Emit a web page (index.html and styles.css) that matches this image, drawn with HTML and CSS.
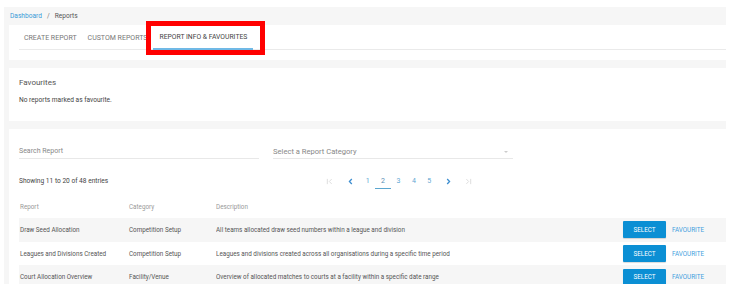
FILE: index.html
```html
<!DOCTYPE html>
<html>
<head>
<meta charset="utf-8">
<link rel="stylesheet" href="styles.css">
</head>
<body>
<div class="page">
  <div class="crumbs"><a class="crumb-link">Dashboard</a><span class="sep">/</span><span>Reports</span></div>

  <div class="card tabs-card">
    <div class="tabs">
      <div class="tab">CREATE REPORT</div>
      <div class="tab">CUSTOM REPORTS</div>
      <div class="tab active">REPORT INFO &amp; FAVOURITES</div>
    </div>
    <div class="highlight"></div>
  </div>

  <div class="card fav-card">
    <div class="fav-title">Favourites</div>
    <div class="fav-empty">No reports marked as favourite.</div>
  </div>

  <div class="card main-card">
    <div class="filters">
      <div class="field">Search Report</div>
      <div class="field select">Select a Report Category<span class="caret"></span></div>
    </div>
    <div class="info-row">
      <div class="showing">Showing 11 to 20 of 48 entries</div>
      <div class="pager">
        <span class="pg icon disabled"><svg width="7" height="7" viewBox="0 0 8 8"><path d="M1.5 1v6M6.5 1.2L3.8 4l2.7 2.8" fill="none" stroke="currentColor" stroke-width="1.1"/></svg></span>
        <span class="pg icon"><svg width="7" height="7" viewBox="0 0 8 8"><path d="M5.5 1.2L2.8 4l2.7 2.8" fill="none" stroke="currentColor" stroke-width="1.5"/></svg></span>
        <span class="pg num">1</span>
        <span class="pg num current">2</span>
        <span class="pg num">3</span>
        <span class="pg num">4</span>
        <span class="pg num">5</span>
        <span class="pg icon"><svg width="7" height="7" viewBox="0 0 8 8"><path d="M2.5 1.2L5.2 4 2.5 6.8" fill="none" stroke="currentColor" stroke-width="1.5"/></svg></span>
        <span class="pg icon disabled"><svg width="7" height="7" viewBox="0 0 8 8"><path d="M1.5 1.2L4.2 4 1.5 6.8M6.5 1v6" fill="none" stroke="currentColor" stroke-width="1.1"/></svg></span>
      </div>
    </div>
    <div class="table">
      <div class="thead">
        <div class="c1">Report</div><div class="c2">Category</div><div class="c3">Description</div>
      </div>
      <div class="row shade">
        <div class="c1">Draw Seed Allocation</div><div class="c2">Competition Setup</div><div class="c3">All teams allocated draw seed numbers within a league and division</div>
        <div class="actions"><span class="btn">SELECT</span><span class="fav">FAVOURITE</span></div>
      </div>
      <div class="row">
        <div class="c1">Leagues and Divisions Created</div><div class="c2">Competition Setup</div><div class="c3">Leagues and divisions created across all organisations during a specific time period</div>
        <div class="actions"><span class="btn">SELECT</span><span class="fav">FAVOURITE</span></div>
      </div>
      <div class="row shade">
        <div class="c1">Court Allocation Overview</div><div class="c2">Facility/Venue</div><div class="c3">Overview of allocated matches to courts at a facility within a specific date range</div>
        <div class="actions"><span class="btn">SELECT</span><span class="fav">FAVOURITE</span></div>
      </div>
    </div>
  </div>
</div>
</body>
</html>
```

FILE: styles.css
```css
* { box-sizing: border-box; }
html, body { margin: 0; padding: 0; background: #fff; overflow: hidden; }
body { font-family: Roboto, "Liberation Sans", sans-serif; color: #555; }

.page {
  margin: 7px 0 0 4px;
  width: 722px;
  height: 300px;
  background: #f6f6f6;
  padding-left: 5px;
}

.crumbs {
  height: 18px;
  display: flex;
  align-items: center;
  gap: 5px;
  padding-left: 1px;
  font-size: 6.6px;
  color: #555;
}
.crumb-link { color: #3a9bd8; }
.sep { color: #777; }

.card { background: #fff; }

.tabs-card {
  position: relative;
  height: 35px;
  padding: 0 0 0 10px;
}
.tabs {
  display: flex;
  height: 25px;
  border-bottom: 1px solid #eaeaea;
}
.tab {
  font-size: 7px;
  color: #777;
  padding: 1px 5px 0;
  margin-right: 1px;
  display: flex;
  align-items: center;
}
.tab.active {
  color: #444;
  padding: 1px 6px 0;
  margin-left: 0;
  border-bottom: 2px solid #70b9e6;
  margin-bottom: -1px;
  font-size: 6.8px;
}
.highlight {
  position: absolute;
  left: 137px;
  top: -4px;
  width: 119px;
  height: 34px;
  border: 5px solid #ff0000;
}

.fav-card {
  margin-top: 8px;
  height: 53px;
  padding: 9px 10px 0;
}
.fav-title { font-size: 8px; color: #555; height: 12px; line-height: 12px; }
.fav-empty { font-size: 6.6px; color: #444; margin-top: 7px; }

.main-card {
  margin-top: 8px;
  height: 200px;
  padding: 16px 0 0 10px;
}
.filters { display: flex; gap: 14px; }
.field {
  width: 240px;
  height: 14px;
  border-bottom: 1px solid #e8e8e8;
  font-size: 7px;
  color: #888;
  padding-top: 2px;
  position: relative;
}
.field.select { font-size: 7.6px; padding-top: 1.5px; }
.caret {
  position: absolute;
  right: 5px;
  top: 6px;
  width: 0; height: 0;
  border-left: 2px solid transparent;
  border-right: 2px solid transparent;
  border-top: 2px solid #ccc;
}

.info-row {
  display: flex;
  align-items: center;
  height: 22px;
  margin-top: 11px;
}
.showing { font-size: 6.6px; color: #444; width: 306px; }
.pager { display: flex; align-items: center; height: 16px; }
.pg {
  font-size: 7px;
  color: #5fa8d3;
  display: flex;
  align-items: center;
  justify-content: center;
  height: 16px;
}
.pg.icon { width: 8px; color: #3d8ed0; }
.pg.icon.disabled { color: #ddd; }
.pager .pg:nth-child(1) { margin-right: 13px; }
.pager .pg:nth-child(2) { margin-right: 6px; }
.pg.num { width: 15.4px; }
.pg.num.current { color: #5a8fb5; border-bottom: 1.5px solid #5ba6cf; height: 15px; }
.pager .pg:nth-child(7) { margin-right: 8px; }
.pager .pg:nth-child(8) { margin-right: 12px; }

.table { margin-top: 7px; }
.thead, .row {
  display: flex;
  align-items: center;
  font-size: 6.3px;
}
.thead { height: 19px; color: #999; align-items: flex-start; padding-top: 4px; }
.row { height: 23.7px; color: #555; }
.row.shade { background: #f6f6f6; }
.c1 { width: 110px; padding-left: 1px; }
.c2 { width: 87px; }
.c3 { flex: 1; white-space: nowrap; overflow: hidden; }
.actions { display: flex; align-items: center; width: 103px; }
.btn {
  width: 43px;
  height: 17px;
  background: #0b8fd4;
  color: #fff;
  font-size: 6.3px;
  display: flex;
  align-items: center;
  justify-content: center;
  border-radius: 1px;
  box-shadow: 0 1px 1px rgba(0,0,0,0.15);
}
.fav { color: #3f9fde; font-size: 6.3px; margin-left: 6px; }
```
